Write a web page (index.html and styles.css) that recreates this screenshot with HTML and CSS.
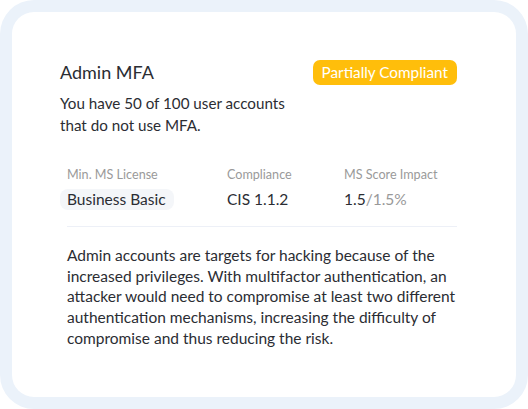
FILE: index.html
```html
<!DOCTYPE html>
<html>
<head>
<meta charset="utf-8">
<link rel="stylesheet" href="styles.css">
</head>
<body>
<div class="frame">
  <div class="card">
    <div class="header">
      <h2 class="title">Admin MFA</h2>
      <span class="badge">Partially Compliant</span>
    </div>
    <p class="summary">You have 50 of 100 user accounts<br>that do not use MFA.</p>
    <div class="details">
      <div class="grid">
        <div class="label">Min. MS License</div>
        <div class="label">Compliance</div>
        <div class="label">MS Score Impact</div>
        <div class="value"><span class="pill">Business Basic</span></div>
        <div class="value">CIS 1.1.2</div>
        <div class="value">1.5<span class="muted">/1.5%</span></div>
      </div>
      <div class="divider"></div>
      <p class="desc">Admin accounts are targets for hacking because of the increased privileges. With multifactor authentication, an attacker would need to compromise at least two different authentication mechanisms, increasing the difficulty of compromise and thus reducing the risk.</p>
    </div>
  </div>
</div>
</body>
</html>
```
FILE: styles.css
```css
* { box-sizing: border-box; }
body {
  margin: 0;
  background: #ffffff;
  font-family: "Lato", "Noto Sans", sans-serif;
  color: #2b2d33;
}
.frame {
  width: 528px;
  height: 409px;
  padding: 12px;
  background: #ebf2fa;
  border-radius: 34px;
}
.card {
  height: 100%;
  background: #ffffff;
  border-radius: 22px;
  padding: 47px 59px 0 48px;
}
.header {
  display: flex;
  justify-content: space-between;
  align-items: center;
}
.title {
  margin: 0;
  font-size: 18px;
  font-weight: 400;
  line-height: 26px;
}
.badge {
  background: #ffbe0b;
  color: #ffffff;
  font-size: 15.3px;
  line-height: 19px;
  padding: 3px 9px;
  border-radius: 7px;
}
.summary {
  margin: 7px 0 0;
  font-size: 15.2px;
  line-height: 22px;
}
.details {
  margin-left: 7px;
  margin-top: 31px;
}
.grid {
  display: grid;
  grid-template-columns: 160px 117px auto;
  row-gap: 6px;
}
.label {
  font-size: 12.6px;
  line-height: 16px;
  color: #9a9a9a;
}
.value {
  font-size: 15.5px;
  line-height: 21px;
}
.pill {
  display: inline-block;
  margin-left: -7px;
  padding: 0 8px 0 7px;
  background: #f4f6f9;
  border-radius: 8px;
}
.muted { color: #999999; }
.divider {
  margin-top: 16px;
  border-top: 1px solid #edf0f7;
}
.desc {
  margin: 18px 0 0;
  font-size: 15.5px;
  line-height: 20.7px;
}
```
